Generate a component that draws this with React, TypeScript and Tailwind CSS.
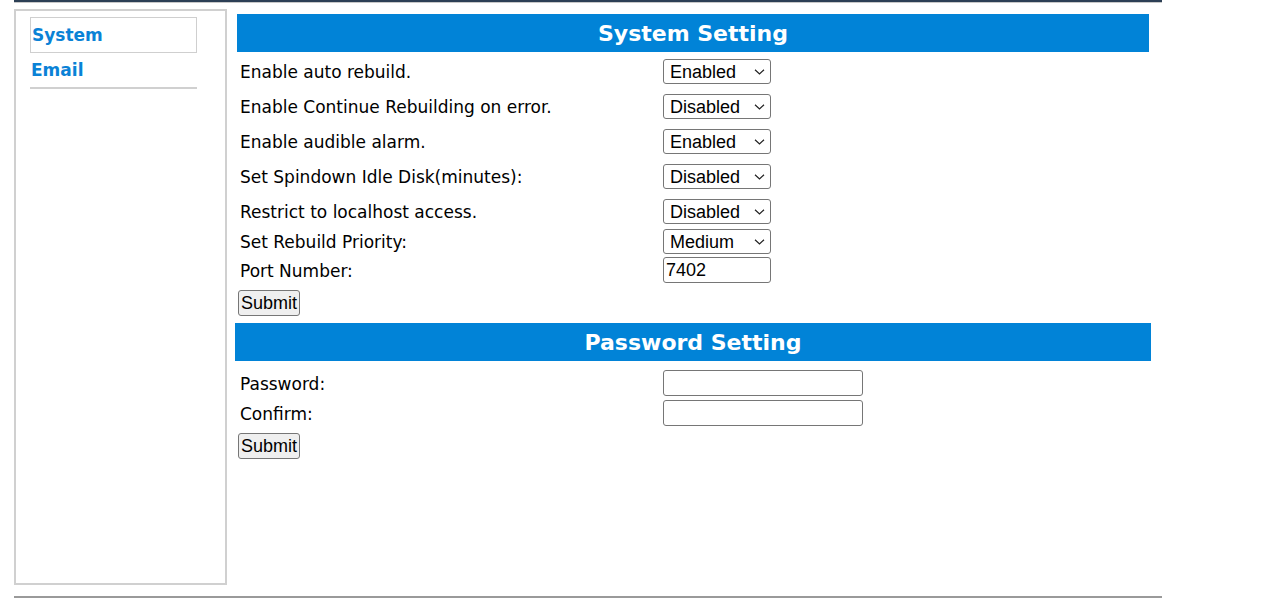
import React from 'react';

const labelFont = { fontFamily: '"DejaVu Sans", Verdana, sans-serif' };

function Chevron() {
  return (
    <svg
      className="pointer-events-none absolute right-[6px] top-1/2 -translate-y-1/2"
      width="11"
      height="7"
      viewBox="0 0 11 7"
      fill="none"
    >
      <path d="M1 1.2l4.5 4.3L10 1.2" stroke="#222" strokeWidth="1.2" />
    </svg>
  );
}

function Select({ value, options }: { value: string; options: string[] }) {
  return (
    <div className="relative h-[25px] w-[108px]">
      <select
        defaultValue={value}
        className="h-full w-full appearance-none rounded-[3px] border border-[#767676] bg-white pl-[6px] font-['Liberation_Sans',Arial,sans-serif] text-[18px] leading-none text-black outline-none"
      >
        {options.map((o) => (
          <option key={o}>{o}</option>
        ))}
      </select>
      <Chevron />
    </div>
  );
}

function SubmitButton() {
  return (
    <button className="h-[26px] rounded-[3px] border border-[#767676] bg-[#efefef] px-[2px] font-['Liberation_Sans',Arial,sans-serif] text-[18px] leading-none text-black">
      Submit
    </button>
  );
}

const onOff = ['Enabled', 'Disabled'];

const systemRows = [
  { label: 'Enable auto rebuild.', value: 'Enabled', options: onOff, h: 'h-[35px]' },
  { label: 'Enable Continue Rebuilding on error.', value: 'Disabled', options: onOff, h: 'h-[35px]' },
  { label: 'Enable audible alarm.', value: 'Enabled', options: onOff, h: 'h-[35px]' },
  { label: 'Set Spindown Idle Disk(minutes):', value: 'Disabled', options: ['Disabled', '1', '5', '10', '30', '60'], h: 'h-[35px]' },
  { label: 'Restrict to localhost access.', value: 'Disabled', options: onOff, h: 'h-[35px]' },
  { label: 'Set Rebuild Priority:', value: 'Medium', options: ['Low', 'Medium', 'High'], h: 'h-[25px]' },
];

export default function App() {
  return (
    <div className="h-[615px] w-[1280px] bg-white text-black">
      <div className="ml-[14px] w-[1148px]">
        <div className="h-[2px] bg-[#2c3f55]" />
        <div className="h-px bg-[#c8c8c8]" />

        <div className="mt-[6px] flex">
          {/* left nav */}
          <aside className="h-[576px] w-[213px] border-2 border-[#d0d0d0] pl-[14px] pr-[28px] pt-[6px]">
            <div className="flex h-[36px] items-center border border-[#cfcfcf] pl-px pt-[2px]">
              <span className="font-['DejaVu_Sans',Verdana,sans-serif] text-[17px] font-bold text-[#0a82d6]">System</span>
            </div>
            <div className="flex h-[36px] items-center border-b-2 border-[#d0d0d0] pl-px pt-[2px]">
              <span className="font-['DejaVu_Sans',Verdana,sans-serif] text-[17px] font-bold text-[#0a82d6]">Email</span>
            </div>
          </aside>

          {/* main */}
          <main className="ml-[8px] w-[916px]" style={labelFont}>
            <section className="ml-[2px] w-[912px] pt-[5px]">
              <div className="flex h-[38px] items-center justify-center bg-[#0183d7]">
                <h2 className="text-[22px] font-bold text-white">System Setting</h2>
              </div>
              <div className="mt-[2px]">
                {systemRows.map((r) => (
                  <div key={r.label} className={`flex items-center ${r.h}`}>
                    <div className="w-[426px] pl-[3px] pt-[3px] text-[17px]">{r.label}</div>
                    <Select value={r.value} options={r.options} />
                  </div>
                ))}
                <div className="flex h-[32px] items-center">
                  <div className="w-[426px] pl-[3px] pt-[3px] text-[17px]">Port Number:</div>
                  <input
                    defaultValue="7402"
                    className="h-[26px] w-[108px] rounded-[3px] border border-[#767676] px-[2px] font-['Liberation_Sans',Arial,sans-serif] text-[18px] text-black outline-none"
                  />
                </div>
                <div className="flex h-[34px] items-center pl-px">
                  <SubmitButton />
                </div>
              </div>
            </section>

            <section className="mt-[3px] w-[916px]">
              <div className="flex h-[38px] items-center justify-center bg-[#0183d7]">
                <h2 className="text-[22px] font-bold text-white">Password Setting</h2>
              </div>
              <div className="mt-[7px]">
                <div className="flex h-[30px] items-center">
                  <div className="w-[428px] pl-[5px] pt-[3px] text-[17px]">Password:</div>
                  <input type="password" className="h-[26px] w-[200px] rounded-[3px] border border-[#767676] outline-none" />
                </div>
                <div className="flex h-[30px] items-center">
                  <div className="w-[428px] pl-[5px] pt-[3px] text-[17px]">Confirm:</div>
                  <input type="password" className="h-[26px] w-[200px] rounded-[3px] border border-[#767676] outline-none" />
                </div>
                <div className="flex h-[36px] items-center pl-[3px]">
                  <SubmitButton />
                </div>
              </div>
            </section>
          </main>
        </div>

        <div className="mt-[11px] h-[2px] bg-[#9a9a9a]" />
      </div>
    </div>
  );
}
